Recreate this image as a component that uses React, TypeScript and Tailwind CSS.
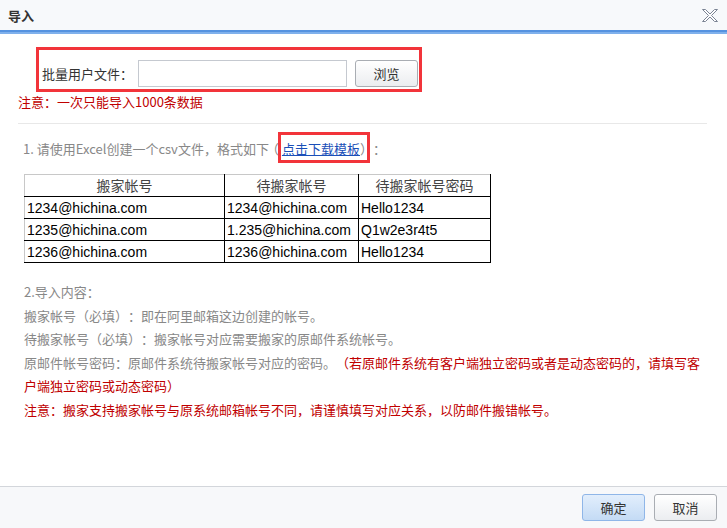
import React from "react";

const rows = [
  ["1234@hichina.com", "1234@hichina.com", "Hello1234"],
  ["1235@hichina.com", "1.235@hichina.com", "Q1w2e3r4t5"],
  ["1236@hichina.com", "1236@hichina.com", "Hello1234"],
];

function CloseIcon() {
  return (
    <svg width="16" height="13" viewBox="0 0 16 13" className="block">
      <polygon
        points="0.5,0.5 3.5,0.5 8,5 12.5,0.5 15.5,0.5 9.5,6.5 15.5,12.5 12.5,12.5 8,8 3.5,12.5 0.5,12.5 6.5,6.5"
        fill="#fff"
        stroke="#7b8494"
        strokeWidth="1"
      />
    </svg>
  );
}

export default function App() {
  return (
    <div
      className="w-[727px] h-[528px] flex flex-col bg-white text-[13px] overflow-hidden [text-spacing-trim:space-all] [font-feature-settings:'chws'_0]"
      style={{ fontFamily: '"Noto Sans CJK SC", "Liberation Sans", sans-serif' }}
    >
      {/* title bar */}
      <div className="h-[30px] shrink-0 bg-[#f7f9fb] flex items-center justify-between pl-[8px] pr-[9px]">
        <span className="font-bold text-[#333] leading-none">导入</span>
        <CloseIcon />
      </div>
      <div className="h-[4px] shrink-0 bg-[#7fb0ec] border-t-2 border-[#5592e0]" />

      {/* body */}
      <div className="flex-1 pl-[18px] pr-[20px]">
        <div className="ml-[18px] mt-[13px] w-[386px] h-[45px] border-[3px] border-[#f2343a] flex items-center pl-[3px] pt-[8px]">
          <span className="text-[#333] w-[96px]">批量用户文件：</span>
          <input
            type="text"
            className="w-[209px] h-[27px] border border-[#c5c9d0] outline-none"
          />
          <button className="ml-[8px] w-[63px] h-[27px] rounded-[3px] border border-[#a9adb3] bg-gradient-to-b from-white to-[#ebedf0] text-[#333]">
            浏览
          </button>
        </div>

        <p className="mt-[1px] leading-[18px] text-[#c00000]">注意：一次只能导入1000条数据</p>

        <div className="mt-[12px] h-px bg-[#e8e8e8]" />

        <div className="mt-[9px] h-[31px] pl-[5px] flex items-center text-[#888]">
          <span>1. 请使用Excel创建一个csv文件，格式如下</span>
          <span className="-ml-[3px] mr-[3px]">（</span>
          <span className="relative">
            <a href="#" className="text-[#1b4fb8] underline">点击下载模板</a>
            <span className="absolute -left-[4px] -top-[7px] w-[92px] h-[31px] border-[3px] border-[#f2343a]" />
          </span>
          <span>）：</span>
        </div>

        <table
          className="mt-[10px] ml-[6px] border-collapse text-[14px]"
          style={{ fontFamily: '"Liberation Sans", "Noto Sans CJK SC", sans-serif' }}
        >
          <thead>
            <tr className="h-[22px]">
              <th className="w-[200px] border border-black border-l-[#c8c8c8] border-t-[#c8c8c8] font-normal text-[#444] p-0 leading-[20px]">
                搬家帐号
              </th>
              <th className="w-[134px] border border-black border-t-[#c8c8c8] font-normal text-[#444] p-0 leading-[20px]">
                待搬家帐号
              </th>
              <th className="w-[132px] border border-black border-t-[#c8c8c8] font-normal text-[#444] p-0 leading-[20px]">
                待搬家帐号密码
              </th>
            </tr>
          </thead>
          <tbody>
            {rows.map((r, i) => (
              <tr key={i} className="h-[22px]">
                <td className="border border-black border-l-[#c8c8c8] px-[2px] py-0 leading-[20px] text-black">{r[0]}</td>
                <td className="border border-black px-[2px] py-0 leading-[20px] text-black">{r[1]}</td>
                <td className="border border-black px-[2px] py-0 leading-[20px] text-black">{r[2]}</td>
              </tr>
            ))}
          </tbody>
        </table>

        <div className="mt-[17px] pl-[6px] w-[689px] leading-[23.6px] text-[#888]">
          <p>2.导入内容：</p>
          <p>搬家帐号（必填）：即在阿里邮箱这边创建的帐号。</p>
          <p>待搬家帐号（必填）：搬家帐号对应需要搬家的原邮件系统帐号。</p>
          <p>
            原邮件帐号密码：原邮件系统待搬家帐号对应的密码。
            <span className="text-[#c00000]">（若原邮件系统有客户端独立密码或者是动态密码的，请填写客户端独立密码或动态密码）</span>
          </p>
          <p className="text-[#c00000]">注意：搬家支持搬家帐号与原系统邮箱帐号不同，请谨慎填写对应关系，以防邮件搬错帐号。</p>
        </div>
      </div>

      {/* footer */}
      <div className="h-[42px] shrink-0 border-t border-[#d3d6db] bg-[#f7f8fa] flex items-center justify-end gap-[9px] pr-[10px]">
        <button className="w-[63px] h-[27px] rounded-[3px] border border-[#8fb6e8] bg-gradient-to-b from-[#e2eefc] to-[#c4dbf5] text-[#333]">
          确定
        </button>
        <button className="w-[63px] h-[27px] rounded-[3px] border border-[#a9adb3] bg-gradient-to-b from-white to-[#ebedf0] text-[#333]">
          取消
        </button>
      </div>
    </div>
  );
}
